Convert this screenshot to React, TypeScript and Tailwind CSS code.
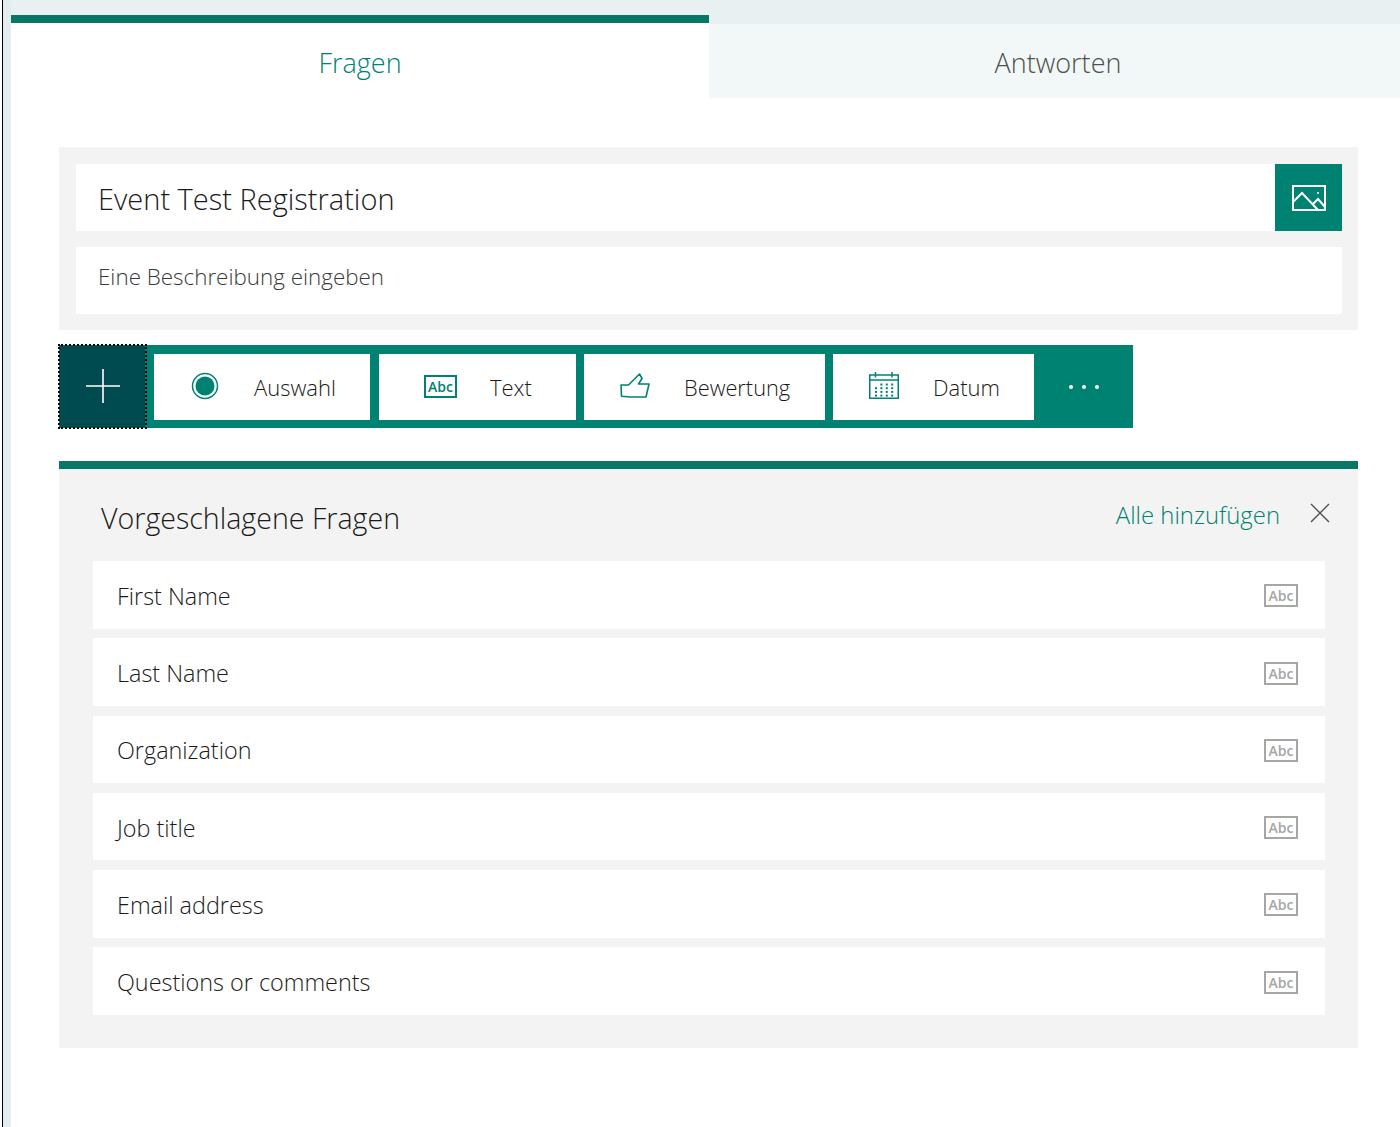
import React from "react";

const rows = ["First Name", "Last Name", "Organization", "Job title", "Email address", "Questions or comments"];

function ImageIcon() {
  return (
    <svg width="34" height="26" viewBox="0 0 34 26" fill="none" stroke="#fff" strokeWidth="2">
      <rect x="1" y="1" width="32" height="24" />
      <path d="M1 17 L10 8 L26 25" />
      <path d="M21 19 L26 14 L33 22" />
      <circle cx="26" cy="8" r="1" fill="#fff" stroke="none" />
    </svg>
  );
}

function RadioIcon() {
  return (
    <svg className="mb-[2px]" width="28" height="28" viewBox="0 0 28 28">
      <circle cx="14" cy="14" r="12.5" fill="none" stroke="#008272" strokeWidth="1.5" />
      <circle cx="14" cy="14" r="9.5" fill="#008272" />
    </svg>
  );
}

function ThumbIcon() {
  return (
    <svg className="mb-[2px]" width="30" height="25" viewBox="0 0 30 25" fill="none" stroke="#008272" strokeWidth="1.6" strokeLinejoin="round">
      <path d="M1 12 H8.5 L19.5 1 L22 5.5 L18.5 11 H29 L26 24 H10 L1.5 23.3 Z" />
    </svg>
  );
}

function CalendarIcon() {
  const dots = [];
  for (let r = 0; r < 4; r++) {
    for (let c = 0; c < 4; c++) {
      if (r === 0 && c === 0) continue;
      dots.push(<rect key={r + "-" + c} x={6 + c * 5.4} y={11.5 + r * 3.7} width="2" height="2" fill="#008272" stroke="none" />);
    }
  }
  return (
    <svg className="mb-[3px]" width="30" height="27" viewBox="0 0 30 27" fill="none" stroke="#008272" strokeWidth="1.5">
      <rect x="0.75" y="3" width="28.5" height="23.25" />
      <path d="M1 8 H29" />
      <path d="M6.5 0 V5.5 M23 0 V5.5" />
      {dots}
    </svg>
  );
}

function AbcBox({ grey }: { grey?: boolean }) {
  return (
    <div
      className={
        grey
          ? "mt-[2px] flex h-[23px] w-[34px] items-center justify-center border-2 border-[#a6a6a6] text-[14px] font-semibold text-[#a6a6a6]"
          : "flex h-[23px] w-[33px] items-center justify-center border-2 border-[#008272] text-[14px] font-semibold text-[#008272]"
      }
    >
      Abc
    </div>
  );
}

export default function App() {
  return (
    <div className="flex h-[1127px] w-[1400px] overflow-hidden bg-white font-['Open_Sans',sans-serif] text-[#1b1a19]">
      <div className="w-[2px] bg-white" />
      <div className="w-px bg-black" />
      <div className="w-[8px] bg-[#e3ecee]" />

      <div className="flex flex-1 flex-col">
        <div className="flex h-[98px] bg-[#e8f0f2]">
          <div className="mt-[15px] flex w-[698px] items-center justify-center border-t-[8px] border-[#077868] bg-white pt-[6px] text-[27px] font-light text-[#008272]">
            Fragen
          </div>
          <div className="mt-[24px] flex flex-1 items-center justify-center bg-[#f2f7f7] pl-[7px] pt-[4px] text-[27px] font-light text-[#505050]">
            Antworten
          </div>
        </div>

        <div className="pl-[48px] pr-[42px] pt-[49px]">
          <div className="flex flex-col gap-4 bg-[#f3f3f3] pb-[16px] pl-[17px] pr-[16px] pt-[17px]">
            <div className="flex h-[67px]">
              <div className="flex flex-1 items-center bg-white pl-[22px] pt-[2px] text-[29px] font-light">Event Test Registration</div>
              <div className="flex w-[67px] items-center justify-center bg-[#008272]">
                <ImageIcon />
              </div>
            </div>
            <div className="flex h-[67px] items-center bg-white pb-[8px] pl-[22px] text-[22.4px] font-light text-[#3b3a39]">Eine Beschreibung eingeben</div>
          </div>

          <div className="mt-[15px] flex h-[83px] w-[1074px] items-center bg-[#008272]">
            <div className="flex h-[85px] w-[89px] -ml-px items-center justify-center border-2 border-dotted border-black bg-[#004b50] bg-clip-padding pb-[1px]">
              <svg width="34" height="34" viewBox="0 0 34 34" stroke="#fff" strokeWidth="1.6">
                <path d="M17 0 V34 M0 17 H34" />
              </svg>
            </div>
            <div className="ml-[7px] flex h-[66px] w-[216px] items-center bg-white pl-[37px]">
              <RadioIcon />
              <span className="ml-[35px] pt-[2px] text-[22px] font-light">Auswahl</span>
            </div>
            <div className="ml-[9px] flex h-[66px] w-[197px] items-center bg-white pl-[45px]">
              <AbcBox />
              <span className="ml-[33px] pt-[2px] text-[22px] font-light">Text</span>
            </div>
            <div className="ml-[8px] flex h-[66px] w-[241px] items-center bg-white pl-[36px]">
              <ThumbIcon />
              <span className="ml-[34px] pt-[4px] text-[21.8px] font-light">Bewertung</span>
            </div>
            <div className="ml-[8px] flex h-[66px] w-[201px] items-center bg-white pl-[36px]">
              <CalendarIcon />
              <span className="ml-[34px] pt-[2px] text-[22px] font-light">Datum</span>
            </div>
            <div className="ml-[35px] flex gap-[9px]">
              <div className="h-[4px] w-[4px] rounded-full bg-white" />
              <div className="h-[4px] w-[4px] rounded-full bg-white" />
              <div className="h-[4px] w-[4px] rounded-full bg-white" />
            </div>
          </div>

          <div className="mt-[33px] h-[587px] border-t-[8px] border-[#077868] bg-[#f3f3f3] pl-[34px] pr-[33px]">
            <div className="flex h-[92px] items-center">
              <div className="ml-[8px] flex-1 pt-[6px] text-[28.6px] font-light">Vorgeschlagene Fragen</div>
              <div className="text-[23.9px] font-light text-[#008272]">Alle hinzufügen</div>
              <svg className="mb-[4px] ml-[30px] mr-[-5px]" width="20" height="20" viewBox="0 0 20 20" stroke="#505050" strokeWidth="1.4">
                <path d="M1 1 L19 19 M19 1 L1 19" />
              </svg>
            </div>
            <div className="flex flex-col gap-[9.8px]">
              {rows.map((r) => (
                <div key={r} className="flex h-[67.5px] items-center justify-between bg-white pl-[24px] pr-[27px] text-[23.4px] font-light">
                  <span className="pt-[3px]">{r}</span>
                  <AbcBox grey />
                </div>
              ))}
            </div>
          </div>
        </div>
      </div>
    </div>
  );
}
